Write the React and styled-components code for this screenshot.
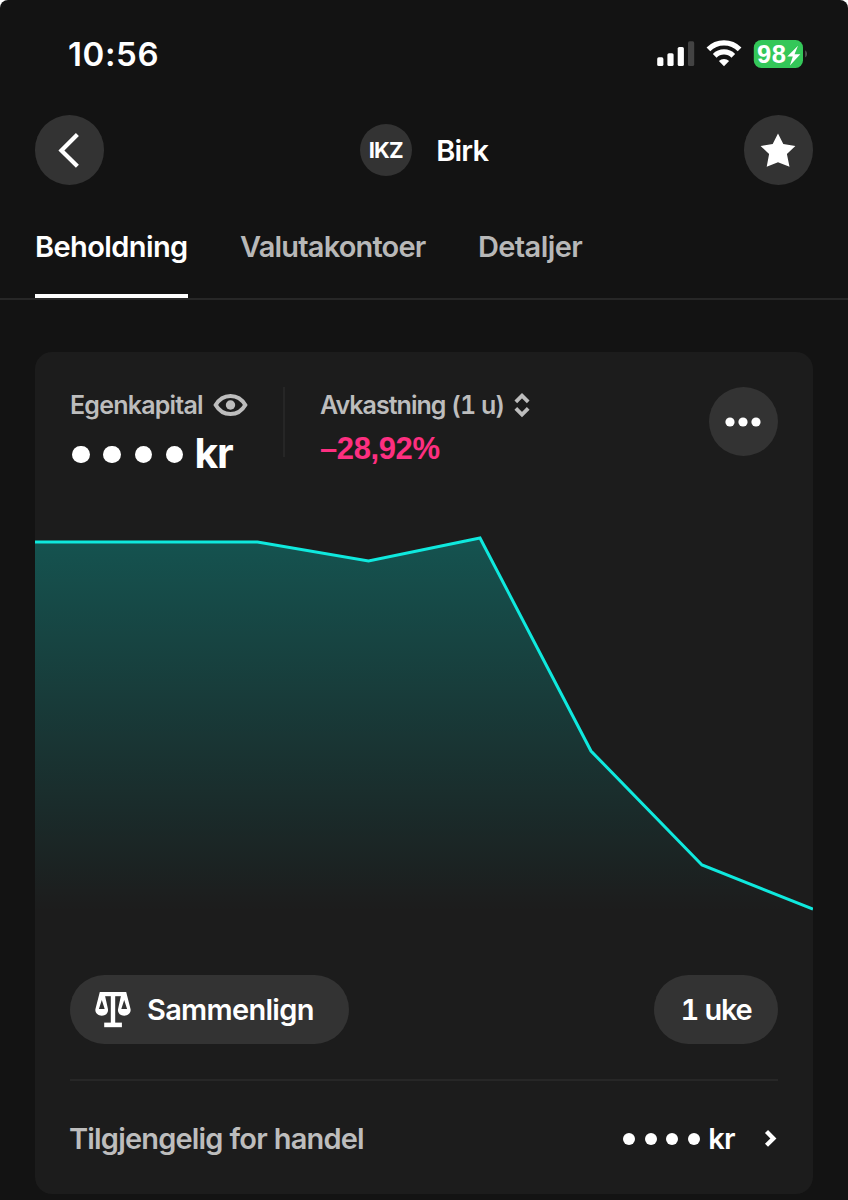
import React from 'react';
import styled, { createGlobalStyle } from 'styled-components';

const GlobalStyle = createGlobalStyle`
  * {
    box-sizing: border-box;
  }

  body {
    margin: 0;
    background: #ffffff;
    font-family: Inter, "Liberation Sans", sans-serif;
    -webkit-font-smoothing: antialiased;
  }

  button {
    border: 0;
    padding: 0;
    font: inherit;
    color: inherit;
  }
`;

// points of the one week chart, in chart pixels
const points = [
  [0, 85],
  [222.5, 85],
  [333.5, 104],
  [445, 81],
  [556, 294],
  [667, 408],
  [778, 452],
];

const tabs = [
  { label: 'Beholdning', active: true, spacing: -0.6 },
  { label: 'Valutakontoer', spacing: -0.82 },
  { label: 'Detaljer', spacing: -0.6 },
];

const StatusIcons = () => (
  <svg width="152" height="30" viewBox="0 0 152 30">
    <rect x="1.2" y="18.3" width="6.2" height="8.8" rx="1.6" fill="#fff" />
    <rect x="11.4" y="14.2" width="6.2" height="12.9" rx="1.6" fill="#fff" />
    <rect x="21.7" y="8" width="6.2" height="19.1" rx="1.6" fill="#fff" />
    <rect x="32" y="2.3" width="6.2" height="24.8" rx="1.6" fill="#434343" />
    <g fill="none" stroke="#fff" strokeWidth="5.2">
      <path d="M52.4 10.4a22 22 0 0 1 31.2 0" />
      <path d="M58.7 16.8a13.1 13.1 0 0 1 18.6 0" />
    </g>
    <path d="M62.9 22.1a7.3 7.3 0 0 1 10.2 0L68 27.2z" fill="#fff" />
    <rect x="97.8" y="1" width="49.2" height="28" rx="7.5" fill="#34c759" />
    <path d="M149.2 11.2a4.6 4.6 0 0 1 0 7.4z" fill="#555" />
    <path d="M142 6.8l-10.8 10.8h5.6l-2.9 8.9 10.4-11.2h-5.8z" fill="#fff" />
  </svg>
);

const BackIcon = () => (
  <svg width="36" height="36" viewBox="0 0 36 36" fill="none">
    <path d="M25.4 2.6L9.4 18.4l16 15.9" stroke="#fff" strokeWidth="4.2" />
  </svg>
);

const StarIcon = () => (
  <svg width="36" height="36" viewBox="0 0 36 36">
    <path
      d="M18 1.5l5.3 10.6 12.1 1.8-8.5 8.2 2.6 12.6L18 30.2 6.7 34.7 9.1 22.1.6 13.9l12.1-1.8z"
      fill="#fff"
    />
  </svg>
);

const EyeIcon = () => (
  <svg width="35" height="24" viewBox="0 0 35 24" fill="none">
    <path
      d="M2.7 12C6 6.2 11 2.9 17.5 2.9S29 6.2 32.3 12C29 17.8 24 21 17.5 21S6 17.8 2.7 12z"
      stroke="#bdbdbd"
      strokeWidth="4"
    />
    <circle cx="17.5" cy="12" r="4.7" fill="#bdbdbd" />
  </svg>
);

const SortIcon = () => (
  <svg width="16" height="26" viewBox="0 0 16 26" fill="none" stroke="#bdbdbd" strokeWidth="3.8">
    <path d="M1.8 9.8L8 3.6l6.2 6.2" />
    <path d="M1.8 16.4L8 22.6l6.2-6.2" />
  </svg>
);

const MoreIcon = () => (
  <svg width="36" height="10" viewBox="0 0 36 10" fill="#fff">
    <circle cx="5" cy="5" r="4.6" />
    <circle cx="18" cy="5" r="4.6" />
    <circle cx="31" cy="5" r="4.6" />
  </svg>
);

const ScalesIcon = () => (
  <svg width="36" height="36" viewBox="0 0 36 36" fill="#fff">
    <path d="M5 0h26v4.2H5z" />
    <path d="M15.8 3h4.4v29h-4.4z" />
    <path d="M9.2 30.6h17.7v4.6H9.2z" />
    <path
      fillRule="evenodd"
      d="M4.8 0h4.4l3.8 17.3c.4 3.9-2.4 6.4-6.2 6.4S-.1 21.2.4 17.3zM6.8 8L3.9 17.1h5.8z"
    />
    <path
      fillRule="evenodd"
      d="M31.2 0h-4.4L23 17.3c-.4 3.9 2.4 6.4 6.2 6.4s6.9-2.5 6.4-6.4zM29.2 8l2.9 9.1h-5.8z"
    />
  </svg>
);

const ChevronRight = () => (
  <svg width="14" height="20" viewBox="0 0 14 20" fill="none">
    <path d="M2.5 2.5l6.9 6.9-6.9 6.9" stroke="#fff" strokeWidth="4.3" />
  </svg>
);

const Masked = ({ size, gap }) => (
  <Dots $gap={gap}>
    {[0, 1, 2, 3].map((i) => (
      <Dot key={i} $size={size} />
    ))}
  </Dots>
);

const Chart = () => {
  const line = points.map((p) => p.join(',')).join(' ');

  return (
    <ChartSvg viewBox="0 0 778 518">
      <defs>
        <linearGradient id="area" x1="0" y1="81" x2="0" y2="455" gradientUnits="userSpaceOnUse">
          <stop offset="0" stopColor="#00f0e4" stopOpacity="0.26" />
          <stop offset="1" stopColor="#00f0e4" stopOpacity="0" />
        </linearGradient>
      </defs>
      <polygon points={`${line} 778,460 0,460`} fill="url(#area)" />
      <polyline points={line} fill="none" stroke="#0fe9de" strokeWidth="3" />
    </ChartSvg>
  );
};

const App = () => {
  return (
    <Screen>
      <GlobalStyle />
      <StatusBar>
        <Clock>10:56</Clock>
        <StatusRight>
          <StatusIcons />
          <BatteryText>98</BatteryText>
        </StatusRight>
      </StatusBar>

      <Header>
        <RoundButton aria-label="Tilbake">
          <BackIcon />
        </RoundButton>
        <Account>
          <Avatar>IKZ</Avatar>
          <AccountName $spacing={-0.75}>Birk</AccountName>
        </Account>
        <RoundButton aria-label="Favoritt">
          <StarIcon />
        </RoundButton>
      </Header>

      <Tabs>
        {tabs.map((tab) => (
          <Tab key={tab.label} $active={tab.active} $spacing={tab.spacing}>
            {tab.label}
          </Tab>
        ))}
      </Tabs>

      <Card>
        <Summary>
          <Equity>
            <Label>
              <LabelText $spacing={-0.78}>Egenkapital</LabelText>
              <EyeIcon />
            </Label>
            <EquityValue>
              <Masked size={17.6} gap={13.7} />
              <BigUnit>kr</BigUnit>
            </EquityValue>
          </Equity>
          <Returns>
            <Label>
              <LabelText $spacing={-0.97}>Avkastning (1 u)</LabelText>
              <SortIcon />
            </Label>
            <ReturnValue>–28,92%</ReturnValue>
          </Returns>
          <RoundButton aria-label="Mer">
            <MoreIcon />
          </RoundButton>
        </Summary>

        <Chart />

        <Actions>
          <Pill $width={279}>
            <ScalesIcon />
            <MediumText $spacing={-0.7}>Sammenlign</MediumText>
          </Pill>
          <Pill $width={124} $center>
            <MediumText $spacing={-1.3}>1 uke</MediumText>
          </Pill>
        </Actions>

        <AvailableRow>
          <AvailableLabel $spacing={-0.84}>Tilgjengelig for handel</AvailableLabel>
          <AvailableValue>
            <Masked size={12} gap={9.7} />
            <Unit $spacing={-0.6}>kr</Unit>
            <ChevronRight />
          </AvailableValue>
        </AvailableRow>
      </Card>
    </Screen>
  );
};

const Screen = styled.main`
  width: 848px;
  height: 1200px;
  background: #131313;
  border-radius: 8px 8px 0 0;
  color: #ffffff;
  overflow: hidden;
`;

const MediumText = styled.span`
  font-size: 29px;
  line-height: 36px;
  font-weight: 600;
  font-feature-settings: "tnum";
  letter-spacing: ${(p) => p.$spacing}px;
  white-space: nowrap;
`;

const StatusBar = styled.div`
  height: 115px;
  padding: 39px 40px 0 68px;
  display: flex;
  justify-content: space-between;
  align-items: flex-start;
`;

const Clock = styled.div`
  font-size: 33px;
  line-height: 30px;
  font-weight: 600;
  letter-spacing: 0.6px;
`;

const StatusRight = styled.div`
  position: relative;
  height: 30px;
`;

/* sits on top of the battery */
const BatteryText = styled.span`
  position: absolute;
  left: 101px;
  top: 0;
  font-family: "Liberation Sans", Arial, sans-serif;
  font-size: 25.5px;
  line-height: 30px;
  font-weight: 700;
  letter-spacing: 0.6px;
`;

const Header = styled.header`
  height: 70px;
  padding: 0 35px;
  display: flex;
  justify-content: space-between;
  align-items: center;
`;

const RoundButton = styled.button`
  width: 69.4px;
  height: 69.4px;
  border-radius: 50%;
  background: #333333;
  display: flex;
  align-items: center;
  justify-content: center;
  flex: none;
`;

const Account = styled.div`
  display: flex;
  align-items: center;
  gap: 24.5px;
`;

const Avatar = styled.div`
  width: 52px;
  height: 52px;
  border-radius: 50%;
  background: #333333;
  display: flex;
  align-items: center;
  justify-content: center;
  font-size: 22px;
  font-weight: 700;
  letter-spacing: -0.9px;
`;

const AccountName = styled(MediumText)`
  padding-top: 2px;
`;

const Tabs = styled.nav`
  height: 115px;
  padding: 0 35px;
  display: flex;
  gap: 52.5px;
  border-bottom: 2px solid #272727;
`;

const Tab = styled(MediumText)`
  height: 113px;
  padding-top: 44px;
  color: ${(p) => (p.$active ? '#ffffff' : '#b8b8b8')};
  border-bottom: 4px solid ${(p) => (p.$active ? '#ffffff' : 'transparent')};
`;

const Card = styled.section`
  margin: 52px 35px 0;
  height: 842px;
  padding-top: 35px;
  border-radius: 17px;
  background: #1c1c1c;
`;

const Summary = styled.div`
  height: 70px;
  padding: 0 35px;
  display: flex;
`;

const Equity = styled.div`
  width: 215px;
  border-right: 2px solid #262626;
`;

const Returns = styled.div`
  flex: 1;
  padding-left: 35px;
`;

const Label = styled.div`
  height: 35px;
  display: flex;
  align-items: center;
  gap: 10px;
  color: #bdbdbd;
`;

const LabelText = styled(MediumText)`
  font-size: 25px;
`;

const EquityValue = styled.div`
  height: 65px;
  padding-left: 2px;
  display: flex;
  align-items: center;
  gap: 11px;
`;

const Dots = styled.div`
  display: flex;
  gap: ${(p) => p.$gap}px;
`;

const Dot = styled.span`
  width: ${(p) => p.$size}px;
  height: ${(p) => p.$size}px;
  border-radius: 50%;
  background: #ffffff;
`;

const BigUnit = styled.span`
  margin-top: -3px;
  font-size: 41px;
  font-weight: 700;
  letter-spacing: -1.1px;
`;

const ReturnValue = styled.div`
  font-family: "Liberation Sans", Arial, sans-serif;
  font-size: 31px;
  line-height: 54px;
  font-weight: 700;
  letter-spacing: -0.4px;
  color: #fd2f80;
`;

const ChartSvg = styled.svg`
  display: block;
  width: 778px;
  height: 518px;
`;

const Actions = styled.div`
  margin: 0 35px;
  height: 106px;
  display: flex;
  justify-content: space-between;
  align-items: flex-start;
  border-bottom: 2px solid #272727;
`;

const Pill = styled.button`
  width: ${(p) => p.$width}px;
  height: 69px;
  padding-left: ${(p) => (p.$center ? 0 : 25)}px;
  border-radius: 35px;
  background: #333333;
  display: flex;
  align-items: center;
  justify-content: ${(p) => (p.$center ? 'center' : 'flex-start')};
  gap: 16px;
`;

const AvailableRow = styled.div`
  height: 115px;
  padding: 0 35px;
  display: flex;
  align-items: center;
  justify-content: space-between;
`;

const AvailableLabel = styled(MediumText)`
  margin-left: -1px;
  color: #bdbdbd;
`;

const AvailableValue = styled.div`
  display: flex;
  align-items: center;
`;

const Unit = styled(MediumText)`
  margin: 0 29px 0 8px;
`;

export default App;
